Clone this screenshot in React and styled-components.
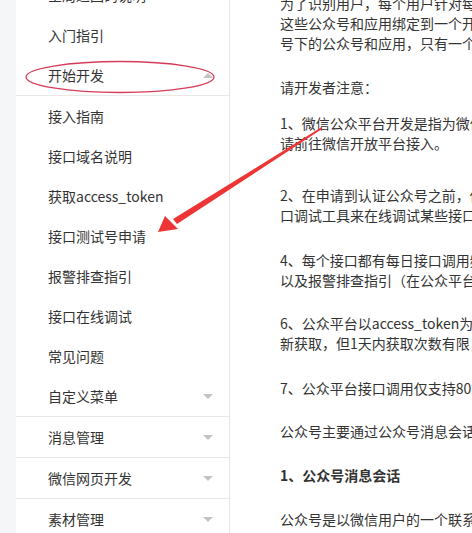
import React from "react";
import styled, { createGlobalStyle } from "styled-components";

const Global = createGlobalStyle`
  html, body { margin: 0; padding: 0; background: #fff; }
  body {
    width: 472px; height: 533px; overflow: hidden;
    font-family: "Noto Sans CJK SC", "Microsoft YaHei", sans-serif;
    color: #333;
  }
`;

const Page = styled.div`
  position: relative;
  display: flex;
  width: 472px;
  height: 533px;
  overflow: hidden;
  background: #fff;
`;

const Gutter = styled.div`
  width: 16px;
  flex: none;
  background: #f5f6f7;
`;

const Sidebar = styled.nav`
  width: 213px;
  flex: none;
  border-right: 1px solid #e4e4e4;
  background: #fff;
  overflow: hidden;
`;

const NavList = styled.ul`
  list-style: none;
  margin: -25px 0 0;
  padding: 0;
`;

const NavRow = styled.li`
  display: flex;
  align-items: center;
  justify-content: space-between;
  height: 40px;
  padding: 0 16px 0 32px;
  font-size: 14px;
  color: #333;
  white-space: nowrap;
  border-bottom: ${(p) => (p.$divider ? "1px solid #e8e8e8" : "none")};
`;

const Caret = styled.span`
  width: 0;
  height: 0;
  border-left: 5px solid transparent;
  border-right: 5px solid transparent;
  ${(p) =>
    p.$up
      ? "border-bottom: 5px solid #c4c4c4;"
      : "border-top: 5px solid #c4c4c4;"}
`;

const Content = styled.main`
  flex: 1;
  min-width: 0;
  padding-left: 50px;
  overflow: hidden;
`;

const Article = styled.div`
  margin-top: -7px;
`;

const Para = styled.p`
  margin: ${(p) => p.$gap}px 0 0;
  font-size: 14px;
  line-height: 20px;
  color: #333;
  font-weight: ${(p) => (p.$bold ? 700 : 400)};
`;

const Line = styled.span`
  display: block;
  white-space: nowrap;
`;

const Overlay = styled.svg`
  position: absolute;
  left: 0;
  top: 0;
  pointer-events: none;
`;

const nav = [
  { label: "全局返回码说明" },
  { label: "入门指引" },
  { label: "开始开发", caret: "up", divider: true },
  { label: "接入指南" },
  { label: "接口域名说明" },
  { label: "获取access_token" },
  { label: "接口测试号申请" },
  { label: "报警排查指引" },
  { label: "接口在线调试" },
  { label: "常见问题" },
  { label: "自定义菜单", caret: "down", divider: true },
  { label: "消息管理", caret: "down", divider: true },
  { label: "微信网页开发", caret: "down", divider: true },
  { label: "素材管理", caret: "down", divider: true },
];

const paras = [
  {
    gap: 0,
    lines: [
      "为了识别用户，每个用户针对每个公众号会产生一个安全的OpenID，如果需要在多公众号、移动应用之间做用户共通，则需前往微信开放平台，将",
      "这些公众号和应用绑定到一个开放平台账号下，绑定后，一个用户虽然对多个公众号和应用有多个不同的OpenID，但他对所有这些同一开放平台账",
      "号下的公众号和应用，只有一个UnionID",
    ],
  },
  { gap: 24, lines: ["请开发者注意："] },
  {
    gap: 16,
    lines: [
      "1、微信公众平台开发是指为微信公众号进行业务开发，为移动应用、PC端网站、公众号第三方平台（为各行各业公众号运营者提供服务）的开发，",
      "请前往微信开放平台接入。",
    ],
  },
  {
    gap: 32,
    lines: [
      "2、在申请到认证公众号之前，你可以先通过测试号申请系统，快速申请一个接口测试号，立即开始接口测试开发。3、在开发过程中，可以使用接",
      "口调试工具来在线调试某些接口。",
    ],
  },
  {
    gap: 25,
    lines: [
      "4、每个接口都有每日接口调用频次限制，可以在公众平台官网-开发者中心处查看具体频次。5、在开发出现问题时，可以通过接口调用的返回码，",
      "以及报警排查指引（在公众平台官网-开发者中心处可以设置接口报警），来发现和解决问题。",
    ],
  },
  {
    gap: 23,
    lines: [
      "6、公众平台以access_token为接口调用凭据，来调用接口，所有接口的调用需要先获取access_token，access_token在2小时内有效，过期需要重",
      "新获取，但1天内获取次数有限，开发者需自行存储，详见获取接口调用凭据（access_token）文档。",
    ],
  },
  { gap: 25, lines: ["7、公众平台接口调用仅支持80端口。"] },
  { gap: 23, lines: ["公众号主要通过公众号消息会话和公众号内网页来为用户提供服务的，下面分别介绍这两种情况："] },
  { gap: 24, bold: true, lines: ["1、公众号消息会话"] },
  { gap: 24, lines: ["公众号是以微信用户的一个联系人形式存在的，消息会话是公众号与用户交互的基础。"] },
];

export default function App() {
  return (
    <>
      <Global />
      <Page>
        <Gutter />
        <Sidebar>
          <NavList>
            {nav.map((n) => (
              <NavRow key={n.label} $divider={n.divider}>
                <span>{n.label}</span>
                {n.caret && <Caret $up={n.caret === "up"} />}
              </NavRow>
            ))}
          </NavList>
        </Sidebar>
        <Content>
          <Article>
            {paras.map((p, i) => (
              <Para key={i} $gap={p.gap} $bold={p.bold}>
                {p.lines.map((l, j) => (
                  <Line key={j}>{l}</Line>
                ))}
              </Para>
            ))}
          </Article>
        </Content>
        <Overlay width="472" height="533" viewBox="0 0 472 533">
          <ellipse cx="120" cy="77" rx="94" ry="15.5" fill="none" stroke="#d63c5a" strokeWidth="1.3" />
          <polygon
            points="321,127.5 322,129 177,224 173,219"
            fill="#ee3535"
          />
          <polygon points="158,232 165,216 178,229" fill="#ee3535" />
        </Overlay>
      </Page>
    </>
  );
}
